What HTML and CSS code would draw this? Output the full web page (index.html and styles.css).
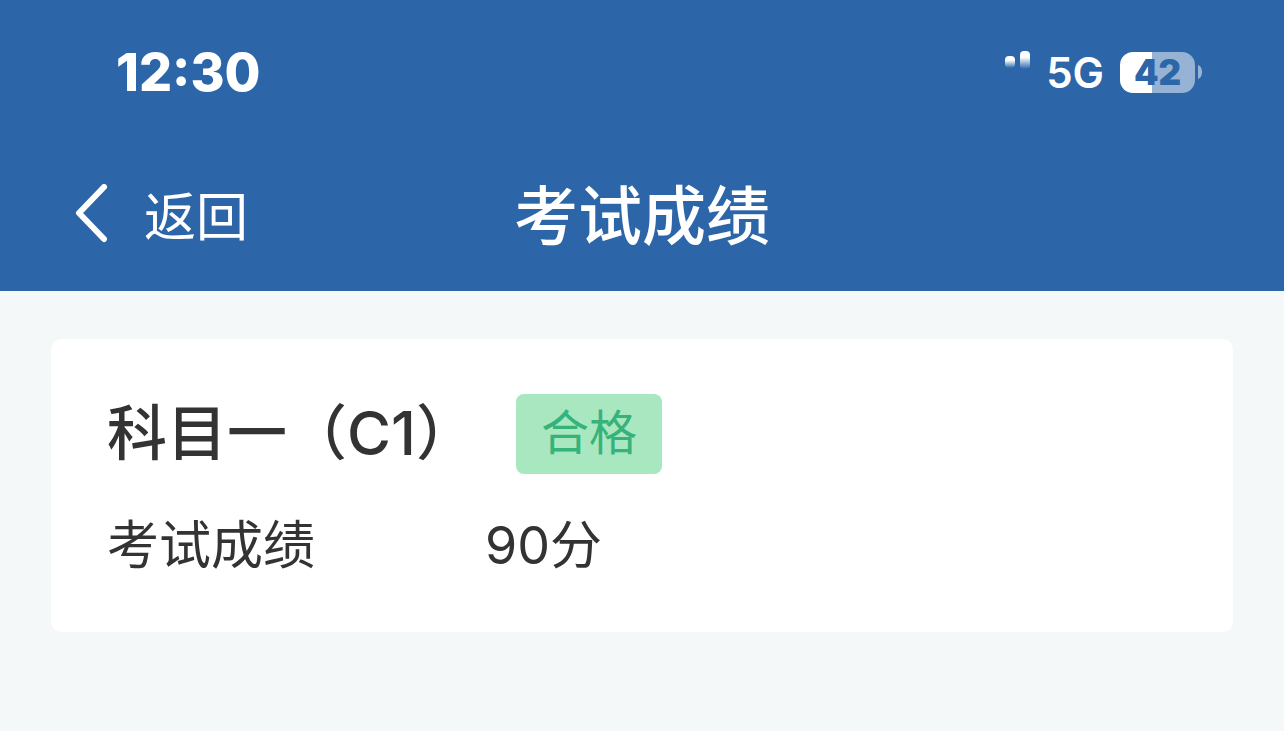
FILE: index.html
```html
<!DOCTYPE html>
<html lang="zh-CN">
<head>
  <meta charset="UTF-8">
  <title>考试成绩</title>
  <meta name="viewport" content="width=device-width, initial-scale=1.0">
  <link rel="stylesheet" href="styles.css">
</head>
<body>
  <header class="header">
    <div class="status-bar">
      <span class="time">12:30</span>
      <div class="status-icons">
        <svg class="signal" width="64" height="48" viewBox="0 0 64 48" aria-hidden="true">
          <defs>
            <linearGradient id="fade" x1="0" y1="0" x2="0" y2="1">
              <stop offset="0.35" stop-color="#fff"/>
              <stop offset="1" stop-color="#fff" stop-opacity="0"/>
            </linearGradient>
          </defs>
          <rect x="39" y="8" width="10" height="12" rx="4" fill="url(#fade)"/>
          <rect x="54" y="3" width="10" height="18" rx="4" fill="url(#fade)"/>
        </svg>
        <span class="network">5G</span>
        <div class="battery">
          <span class="battery-level">42</span>
          <svg class="battery-cap" width="4" height="14" viewBox="0 0 4 14" aria-hidden="true">
            <path d="M0 0C3 1 4 4 4 7S3 13 0 14Z" fill="#96b2d5"/>
          </svg>
        </div>
      </div>
    </div>

    <nav class="nav-bar">
      <a class="back" href="#">
        <svg width="34" height="60" viewBox="0 0 34 60" aria-hidden="true">
          <path d="M30 3L5 29L30 55" fill="none" stroke="#fff" stroke-width="6" stroke-linecap="round" stroke-linejoin="round"/>
        </svg>
        <span>返回</span>
      </a>
      <h1>考试成绩</h1>
    </nav>
  </header>

  <main class="content">
    <section class="card">
      <div class="card-title">
        <h2>科目一（C1）</h2>
        <span class="badge">合格</span>
      </div>
      <dl class="row">
        <dt>考试成绩</dt>
        <dd>90分</dd>
      </dl>
    </section>
  </main>
</body>
</html>
```
FILE: styles.css
```css
* {
  box-sizing: border-box;
}

body {
  font-family: Inter, 'Noto Sans CJK SC', sans-serif;
  background-color: #f4f8f9;
  color: #333;
  margin: 0;
}

h1, h2, dl, dd {
  margin: 0;
}

h1, h2 {
  font-weight: 500;
}

.header {
  background: #2c66a9;
  color: #fff;
  padding: 44px 0 40px;
}

.status-bar {
  display: flex;
  justify-content: space-between;
  align-items: center;
  height: 56px;
  padding: 0 82px 0 116px;
}

.time {
  font-size: 52px;
  font-weight: 800;
}

.status-icons {
  display: flex;
  align-items: center;
}

.network {
  font-size: 42px;
  font-weight: 600;
  margin: 0 16px;
}

.battery {
  display: flex;
  align-items: center;
  gap: 3px;
}

.battery-level {
  width: 75px;
  height: 41px;
  border-radius: 13px;
  background: linear-gradient(to right, #fff 32px, #96b2d5 32px);
  color: #2c66a9;
  font-size: 35px;
  font-weight: 900;
  line-height: 41px;
  text-align: center;
}

/* back link on the left, title in the middle */
.nav-bar {
  display: flex;
  justify-content: center;
  align-items: center;
  position: relative;
  height: 75px;
  margin-top: 76px;
}

.back {
  position: absolute;
  left: 74px;
  display: flex;
  align-items: center;
  gap: 36px;
  color: #fff;
  font-size: 52px;
  text-decoration: none;
}

h1 {
  font-size: 64px;
  line-height: 80px;
  padding-top: 4px;
}

.content {
  padding: 48px 51px;
}

.card {
  background: #fff;
  border-radius: 10px;
  padding: 55px 56px 48px;
}

.card-title {
  display: flex;
  align-items: center;
  gap: 40px;
  height: 80px;
}

h2 {
  font-size: 60px;
  line-height: 80px;
  padding-bottom: 2px;
}

.badge {
  height: 80px;
  background: #a9e7c1;
  color: #36b37a;
  border-radius: 8px;
  padding: 0 25px;
  font-size: 48px;
  line-height: 78px;
}

.row {
  display: flex;
  margin-top: 34px;
  font-size: 52px;
  line-height: 76px;
}

.row dt {
  width: 378px;
}
```
